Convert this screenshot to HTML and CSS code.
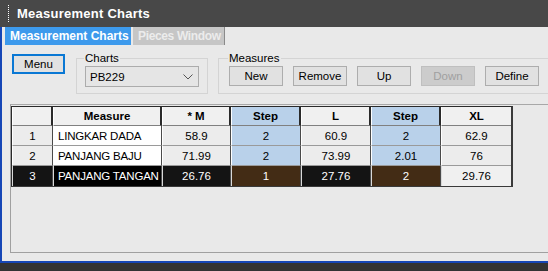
FILE: index.html
```html
<!DOCTYPE html>
<html>
<head>
<meta charset="utf-8">
<link rel="stylesheet" href="styles.css">
</head>
<body>
<div class="titlebar"><span class="grip"></span><span class="title">Measurement Charts</span></div>
<div class="window">
  <div class="tabs">
    <div class="tab active">Measurement Charts</div>
    <div class="tab">Pieces Window</div>
  </div>
  <div class="pane">
    <div class="toolbar">
      <button class="btn menu">Menu</button>
      <fieldset class="group charts">
        <legend>Charts</legend>
        <div class="select"><span>PB229</span>
          <svg width="10" height="6" viewBox="0 0 10 6"><path d="M0.5 0.5 L5 5 L9.5 0.5" fill="none" stroke="#555" stroke-width="1"/></svg>
        </div>
      </fieldset>
      <fieldset class="group measures">
        <legend>Measures</legend>
        <button class="btn">New</button>
        <button class="btn">Remove</button>
        <button class="btn">Up</button>
        <button class="btn disabled">Down</button>
        <button class="btn">Define</button>
      </fieldset>
    </div>
    <div class="frame">
      <table class="grid">
        <colgroup>
          <col class="c-rh"><col class="c-ms"><col class="c-m"><col class="c-n"><col class="c-n"><col class="c-n"><col class="c-n">
        </colgroup>
        <thead>
          <tr><th></th><th>Measure</th><th>* M</th><th class="step">Step</th><th>L</th><th class="step">Step</th><th>XL</th></tr>
        </thead>
        <tbody>
          <tr><td class="rh">1</td><td class="ms">LINGKAR DADA</td><td class="val">58.9</td><td class="step">2</td><td class="val">60.9</td><td class="step">2</td><td class="val">62.9</td></tr>
          <tr><td class="rh">2</td><td class="ms">PANJANG BAJU</td><td class="val">71.99</td><td class="step">2</td><td class="val">73.99</td><td class="step">2.01</td><td class="val">76</td></tr>
          <tr class="sel"><td class="rh">3</td><td class="ms">PANJANG TANGAN</td><td class="val">26.76</td><td class="step">1</td><td class="val">27.76</td><td class="step">2</td><td class="val last">29.76</td></tr>
        </tbody>
      </table>
    </div>
  </div>
</div>
<div class="footer"></div>
</body>
</html>
```
FILE: styles.css
```css
* { box-sizing: border-box; }
html, body { margin: 0; padding: 0; }
body {
  width: 548px;
  height: 271px;
  overflow: hidden;
  background: #333333;
  font-family: "Liberation Sans", Arial, sans-serif;
  font-size: 11px;
  color: #000;
}
.titlebar {
  height: 27px;
  background: #484848;
  display: flex;
  align-items: center;
  padding-left: 8px;
}
.grip {
  width: 1px;
  height: 17px;
  border-left: 1px dotted #ffffff;
  margin-right: 8px;
}
.title {
  color: #ffffff;
  font-weight: bold;
  font-size: 13px;
  letter-spacing: 0.25px;
}
.window {
  height: 236px;
  background: #e9e9e9;
  border-left: 2px solid #1646b6;
  border-bottom: 2px solid #1646b6;
  display: flex;
  flex-direction: column;
}
.tabs {
  height: 18px;
  display: flex;
  padding-left: 3px;
  gap: 2px;
}
.tab {
  height: 18px;
  line-height: 18px;
  padding: 0 0 0 5px;
  font-weight: bold;
  font-size: 12px;
  white-space: nowrap;
  overflow: hidden;
  color: #ececec;
  background: #c6c6c6;
  border-right: 1px solid #8a8a8a;
  width: 92px;
  letter-spacing: -0.35px;
}
.tab.active {
  width: 126px;
  background: #3d9aec;
  color: #ffffff;
  border-right: none;
  letter-spacing: 0;
}
.pane {
  flex: 1;
  display: flex;
  flex-direction: column;
  padding-left: 8px;
}
.toolbar {
  display: flex;
  align-items: flex-start;
  height: 59px;
  padding-top: 10px;
}
.btn {
  font-family: "Liberation Sans", Arial, sans-serif;
  font-size: 11.5px;
  color: #000;
  background: #e1e1e1;
  border: 1px solid #adadad;
  width: 54px;
  height: 20px;
  padding: 0;
  margin: 0;
  line-height: 17px;
  white-space: nowrap;
}
.btn.menu {
  width: 53px;
  height: 20px;
  border: 2px solid #0a78d4;
  margin-left: 2px;
  margin-top: -1px;
  line-height: 15px;
}
.btn.disabled {
  background: #cccccc;
  border-color: #bfbfbf;
  color: #a0a0a0;
}
.group {
  margin: 0;
  border: 1px solid #d4d4d4;
  padding: 0 8px 6px 8px;
  height: 43px;
  margin-top: -4px;
}
.group legend {
  padding: 0 1px;
  margin-left: -1px;
  font-size: 11.5px;
  line-height: 14px;
}
.charts {
  margin-left: 11px;
  width: 131px;
}
.measures {
  margin-left: 10px;
  flex: 1;
  margin-right: -20px;
  display: flex;
  gap: 10px;
  padding-left: 10px;
}
.measures .btn { margin-top: 1px; }
.select {
  margin-top: 1px;
  width: 114px;
  height: 21px;
  border: 1px solid #acacac;
  background: #e5e5e5;
  display: flex;
  align-items: center;
  justify-content: space-between;
  padding: 0 5px 0 4px;
  font-size: 11.5px;
}
.select svg { margin-top: 1px; }
.frame {
  margin-right: -4px;
  height: 149px;
  border-top: 1px solid #a8a8a8;
  border-left: 1px solid #a0a0a0;
  border-bottom: 1px solid #a0a0a0;
  padding-top: 1px;
}
.grid {
  border-collapse: separate;
  border-spacing: 0;
  table-layout: fixed;
  width: 501px;
  border-top: 1px solid #2a2a2a;
  border-left: 1px solid #2a2a2a;
  border-right: 2px solid #3a3a3a;
  border-bottom: 1px solid #3a3a3a;
}
.c-rh { width: 41px; }
.c-ms { width: 109px; }
.c-m { width: 69px; }
.c-n { width: 70px; }
.grid th, .grid td {
  padding: 0;
  text-align: center;
  white-space: nowrap;
  overflow: hidden;
  font-size: 11.5px;
  border-left: 1px solid #ffffff;
  border-right: 1px solid #4a4a4a;
  border-bottom: 1px solid #9a9a9a;
}
.grid th {
  height: 19px;
  font-weight: bold;
  font-size: 11.5px;
  background: #f0f0f0;
  border-right: 2px solid #2a2a2a;
  border-bottom: 1px solid #808080;
}
.grid th:last-child, .grid td:last-child { border-right: none; }
.grid th.step { background: #b9d1ea; }
.grid td {
  height: 20px;
  background: #ececec;
}
.grid td.ms {
  text-align: left;
  padding-left: 4px;
  background: #ffffff;
  letter-spacing: -0.2px;
}
.grid td.step { background: #b9d1ea; }
.grid tbody tr:last-child td { border-bottom: none; }
.grid tr.sel td { background: #141414; color: #ffffff; border-left-color: #d8d8d8; }
.grid tr.sel td.ms { background: #000000; }
.grid tr.sel td.step { background: #432c15; }
.grid tr.sel td.last { background: #f0f0f0; color: #000; }
.footer {
  height: 8px;
  background: #333333;
}
```
